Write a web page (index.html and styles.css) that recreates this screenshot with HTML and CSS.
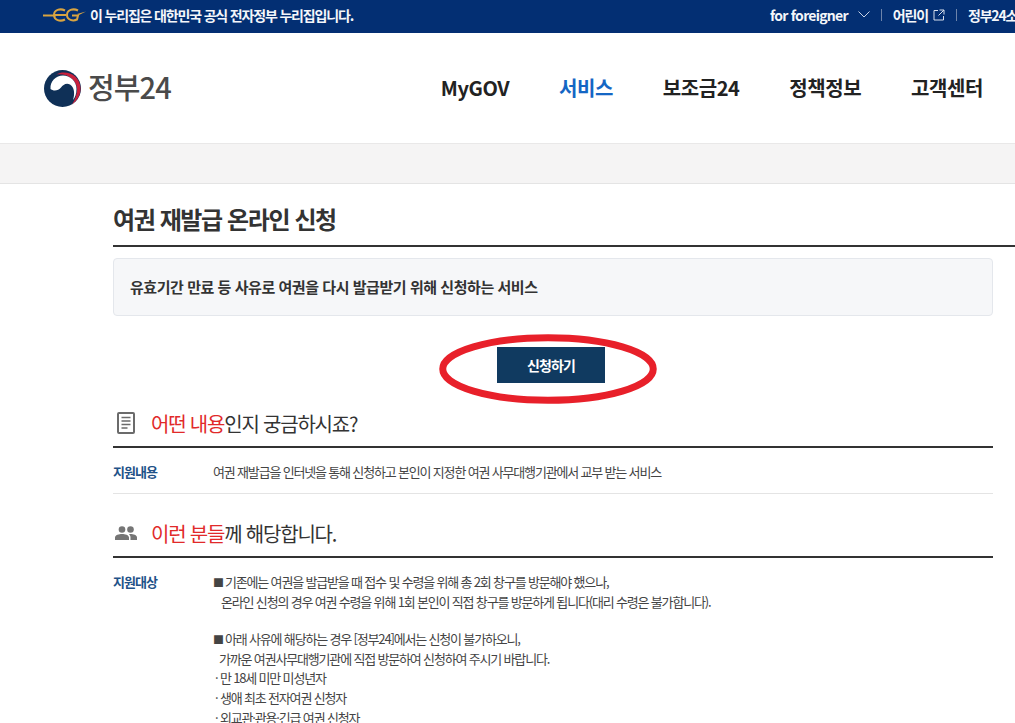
FILE: index.html
```html
<!DOCTYPE html>
<html lang="ko">
<head>
<meta charset="utf-8">
<title>여권 재발급 온라인 신청 | 정부24</title>
<link rel="stylesheet" href="styles.css">
</head>
<body>
<div class="topbar">
  <div class="gov-note">
    <svg class="eg" width="43" height="16" viewBox="0 0 43 16"><g fill="none" stroke="#d9a441" stroke-width="2"><path d="M0 8.500h13"/><path d="M22 3.500c-5-2.500-11-.5-11 4.500s6 7 11 4.500"/><path d="M12 8h11"/><path d="M35 3.500c-5-2.500-11-.5-11 4.500s6 6.500 10 4.500l1-4h-6"/></g><path d="M34 7l9-2.500-7 3.500z" fill="#d9a441"/></svg>
    <span>이 누리집은 대한민국 공식 전자정부 누리집입니다.</span>
  </div>
  <div class="util">
    <span class="foreigner">for foreigner</span>
    <svg class="chev" width="12" height="7" viewBox="0 0 12 7"><path d="M.5.5 6 6l5.500-5.500" fill="none" stroke="#c9d4e6" stroke-width="1"/></svg>
    <i class="sep"></i>
    <span>어린이</span>
    <svg class="ext" width="12" height="12" viewBox="0 0 12 12"><path d="M5 1.500H1v9.500h9.500V7M6.500 1h4.500v4.500M11 1 5.500 6.500" fill="none" stroke="#d7dfec" stroke-width="1"/></svg>
    <i class="sep"></i>
    <span class="clip">정부24소개</span>
  </div>
</div>

<header class="header">
  <div class="logo">
    <svg width="37" height="37" viewBox="0 0 37 37">
      <circle cx="18.500" cy="18.500" r="18.500" fill="#0f3057"/>
      <path d="M12 4.500C22-1 36 5 36.500 18c.3 7-3.500 13-8.500 16.500 4-6 5.500-12.500 5-16.500C32 10 24 3 12 4.500z" fill="#c8203c"/>
      <path d="M6.500 19C6 11 12 5.500 19 5.500c7 0 13.500 5.500 13.500 13.500 0 5-1.500 8.500-3.500 11 2-6 1.500-13-3-15.500-4-2-7 .5-9 3-2 2.500-6 4-8.500 2.500-1-.5-1.500-.5-2-1z" fill="#fff"/>
    </svg>
    <span class="logo-text">정부24</span>
  </div>
  <nav class="nav">
    <a>MyGOV</a>
    <a class="active">서비스</a>
    <a>보조금24</a>
    <a>정책정보</a>
    <a>고객센터</a>
  </nav>
</header>

<div class="crumb"></div>

<main class="main">
  <h1 class="title">여권 재발급 온라인 신청</h1>
  <div class="summary">유효기간 만료 등 사유로 여권을 다시 발급받기 위해 신청하는 서비스</div>

  <div class="apply">
    <a class="apply-btn">신청하기</a>
    <svg class="oval" width="218" height="70" viewBox="0 0 218 70"><ellipse cx="109" cy="35" rx="105.250" ry="31.250" fill="none" stroke="#e8202a" stroke-width="7"/></svg>
  </div>

  <section class="sec sec-one">
    <h2 class="sec-title">
      <svg class="ico" width="18" height="22" viewBox="0 0 18 22"><rect x="1" y="1" width="16" height="20" rx="1" fill="none" stroke="#6b6b6b" stroke-width="2"/><path d="M4.500 5.500h9M4.500 9h9M4.500 12.500h9M4.500 16h6" stroke="#6b6b6b" stroke-width="1.500"/></svg>
      <span><em>어떤 내용</em>인지 궁금하시죠?</span>
    </h2>
    <div class="row row-line">
      <div class="label">지원내용</div>
      <div class="val">여권 재발급을 인터넷을 통해 신청하고 본인이 지정한 여권 사무대행기관에서 교부 받는 서비스</div>
    </div>
  </section>

  <section class="sec sec-two">
    <h2 class="sec-title">
      <svg class="ico ico-people" width="22" height="14" viewBox="0 0 22 14"><circle cx="7" cy="3.500" r="3.300" fill="#757575"/><circle cx="15.500" cy="3.500" r="3.300" fill="#757575"/><path d="M0 14v-2.500C0 9 4 8 7 8s7 1 7 3.500V14zM15.500 14v-2.500c0-1.300-.5-2.400-1.500-3.300 3.300-.4 8 .8 8 3.300V14z" fill="#757575"/></svg>
      <span><em>이런 분들</em>께 해당합니다.</span>
    </h2>
    <div class="row">
      <div class="label">지원대상</div>
      <div class="val body">
        <p><span class="sq">■</span> 기존에는 여권을 발급받을 때 접수 및 수령을 위해 총 2회 창구를 방문해야 했으나,</p>
        <p class="ind">온라인 신청의 경우 여권 수령을 위해 1회 본인이 직접 창구를 방문하게 됩니다(대리 수령은 불가합니다).</p>
        <p class="blank">&nbsp;</p>
        <p><span class="sq">■</span> 아래 사유에 해당하는 경우 [정부24]에서는 신청이 불가하오니,</p>
        <p class="ind2">가까운 여권사무대행기관에 직접 방문하여 신청하여 주시기 바랍니다.</p>
        <p class="ind3">· 만 18세 미만 미성년자</p>
        <p class="ind3">· 생애 최초 전자여권 신청자</p>
        <p class="ind3">· 외교관·관용·긴급 여권 신청자</p>
      </div>
    </div>
  </section>
</main>
</body>
</html>
```

FILE: styles.css
```css
* { box-sizing: border-box; }
html, body { margin: 0; padding: 0; height: 723px; overflow: hidden; }
body { width: 1015px; background: #fff; color: #333; font-family: "Noto Sans CJK KR", "Noto Sans", sans-serif; }

.topbar { height: 33px; background: #032f73; color: #f4f6fa; display: flex; align-items: center; justify-content: space-between; padding-left: 43px; padding-bottom: 4px; font-size: 14px; font-weight: 700; letter-spacing: -1.17px; white-space: nowrap; overflow: hidden; }
.gov-note { display: flex; align-items: center; gap: 4px; }
.util { display: flex; align-items: center; width: 245px; flex: none; }
.foreigner { letter-spacing: -0.75px; }
.chev { margin-left: 10px; flex: none; }
.sep { width: 1px; height: 12px; background: #6d84ab; margin: 0 11px; flex: none; }
.ext { margin-left: 5px; flex: none; }
.clip { flex: none; }

.header { height: 110px; display: flex; align-items: center; justify-content: space-between; padding: 0 32px 0 44px; background: #fff; }
.logo { display: flex; align-items: center; gap: 7px; }
.logo-text { font-size: 29px; font-weight: 500; color: #4a4a4a; letter-spacing: -0.9px; line-height: 37px; margin-top: -4px; }
.nav { display: flex; gap: 49.750px; font-size: 20px; font-weight: 700; color: #222; letter-spacing: -0.4px; padding-bottom: 2px; }
.nav .active { color: #1466c4; }

.crumb { height: 41px; background: #f5f4f4; border-top: 1px solid #e9e8e8; border-bottom: 1px solid #e4e4e4; }

.main { width: 1000px; padding-left: 113px; }
.title { margin: 0; height: 63px; padding-top: 18px; width: 902px; border-bottom: 2px solid #333; font-size: 24px; line-height: 34px; font-weight: 700; color: #333; letter-spacing: -1.4px; }
.summary { width: 880px; height: 58px; margin-top: 11px; border: 1px solid #e4e7ec; border-radius: 4px; background: #f6f7f9; padding: 0 0 2px 16px; display: flex; align-items: center; font-size: 15px; font-weight: 700; letter-spacing: -0.45px; color: #333; }

.apply { position: relative; width: 880px; margin-top: 31px; padding-right: 4px; display: flex; justify-content: center; }
.apply-btn { width: 108px; height: 36px; background: #103a60; color: #fff; display: flex; align-items: center; justify-content: center; font-size: 14px; font-weight: 700; letter-spacing: -0.9px; }
.oval { position: absolute; left: 326px; top: -13px; }

.sec { width: 880px; }
.sec-one { margin-top: 24px; }
.sec-two { margin-top: 23px; }
.sec-title { margin: 0; display: flex; align-items: center; height: 41px; border-bottom: 2px solid #333; font-size: 20px; font-weight: 400; letter-spacing: -1.2px; color: #333; padding-bottom: 7px; }
.sec-title em { font-style: normal; color: #e12a2a; }
.ico { margin-left: 4px; margin-right: 16px; flex: none; }
.ico-people { margin-left: 2px; margin-right: 14px; }

.row { display: flex; font-size: 13px; letter-spacing: -1.17px; }
.row-line { height: 46px; padding-top: 1px; align-items: center; border-bottom: 1px solid #e4e4e4; }
.label { width: 100px; flex: none; color: #1f5288; font-weight: 700; letter-spacing: -1px; }
.val { color: #444; }
.body { padding-top: 14px; }
.sec-two .label { padding-top: 14px; }
.body p { margin: 0; line-height: 19.600px; height: 19.600px; white-space: nowrap; }
.body .blank { height: 18px; }
.sq { font-size: 11px; letter-spacing: -1.5px; }
.body .ind { padding-left: 8px; }
.body .ind2 { padding-left: 6px; }
.body .ind3 { padding-left: 2px; }
```
